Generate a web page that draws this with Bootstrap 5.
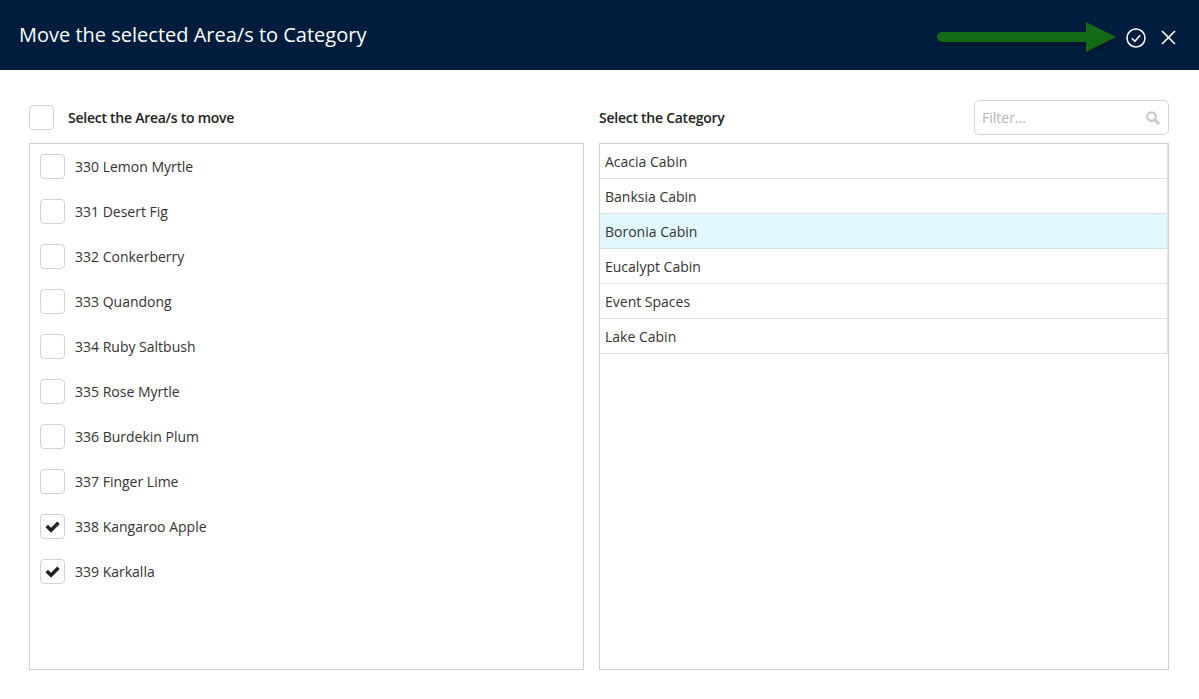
<!DOCTYPE html>
<html lang="en">
<head>
    <meta charset="UTF-8">
    <meta name="viewport" content="width=device-width, initial-scale=1.0">
    <title>Move Areas</title>
    <link href="https://cdn.jsdelivr.net/npm/bootstrap@5.3.3/dist/css/bootstrap.min.css" rel="stylesheet">
    <style>
        body { font-family: "Open Sans", "Liberation Sans", sans-serif; font-size: 14px; color: #333; background: #fff; height: 699px; overflow: hidden; }
        .top-bar { height: 70px; background: #001d3d; color: #fff; padding: 0 23px 0 19px; position: relative; }
        .top-title { font-size: 20px; line-height: 70px; font-weight: 400; margin: 0; }
        .top-icons { gap: 15px; padding-top: 5px; }
        .top-arrow { position: absolute; left: 937px; top: 22px; filter: drop-shadow(0 2px 2px rgba(0,0,0,.45)); }
        .panes { padding: 30px 30px 0 29px; gap: 15px; }
        .pane-left { width: 555px; }
        .pane-right { width: 570px; }
        .pane-head { height: 35px; margin-bottom: 8px; }
        .pane-label { font-weight: 600; color: #222; letter-spacing: -.26px; }
        .head-gap { margin-left: 14px; }
        .tick-box { width: 25px; height: 25px; border: 1px solid #d4d4d4; border-radius: 4px; background: #fff; flex: none; }
        .filter-box { width: 195px; height: 35px; border: 1px solid #d4d4d4; border-radius: 5px; padding: 0 8px 0 7px; color: #b5b5b5; }
        .list-frame { height: 527px; border: 1px solid #d0d0d0; }
        .area-list { padding: 10px 10px 0; }
        .area-row { height: 25px; margin-bottom: 20px; gap: 10px; }
        .cat-row { height: 35px; padding: 0 5px; border-bottom: 1px solid #e2e2e2; border-right: 1px solid #e2e2e2; line-height: 35px; }
        .cat-row.picked { background: #e1f8fe; border-bottom-color: #cfe2e6; }
    </style>
</head>
<body>
    <div class="top-bar d-flex align-items-center justify-content-between">
        <h1 class="top-title">Move the selected Area/s to Category</h1>
        <div class="top-icons d-flex align-items-center">
            <svg width="20" height="20" viewBox="0 0 20 20" fill="none" stroke="#fff"><circle cx="10" cy="10" r="9" stroke-width="1.5"/><path d="M5.8 10.3l3 3 5.4-6" stroke-width="1.5"/></svg>
            <svg width="15" height="15" viewBox="0 0 15 15" fill="none" stroke="#fff" stroke-width="1.6"><path d="M1 1l13 13M14 1L1 14"/></svg>
        </div>
        <svg class="top-arrow" width="180" height="30" viewBox="0 0 180 30"><path d="M5 10H149V0L179 15 149 30V20H5a5 5 0 0 1 0-10z" fill="#116b16"/></svg>
    </div>
    <div class="panes d-flex">
        <div class="pane-left">
            <div class="pane-head d-flex align-items-center">
                <span class="tick-box"></span>
                <span class="pane-label head-gap">Select the Area/s to move</span>
            </div>
            <div class="list-frame area-list" id="areas"></div>
        </div>
        <div class="pane-right">
            <div class="pane-head d-flex align-items-center justify-content-between">
                <span class="pane-label">Select the Category</span>
                <div class="filter-box d-flex align-items-center justify-content-between">
                    <span>Filter...</span>
                    <svg width="14" height="14" viewBox="0 0 14 14" fill="none" stroke="#c8c8c8"><circle cx="5.6" cy="5.6" r="4.3" stroke-width="2.2"/><path d="M9 9l4 4" stroke-width="3"/></svg>
                </div>
            </div>
            <div class="list-frame" id="cats"></div>
        </div>
    </div>
    <script>
        const areas = ['330 Lemon Myrtle', '331 Desert Fig', '332 Conkerberry', '333 Quandong', '334 Ruby Saltbush', '335 Rose Myrtle', '336 Burdekin Plum', '337 Finger Lime', '338 Kangaroo Apple', '339 Karkalla'];
        const cats = ['Acacia Cabin', 'Banksia Cabin', 'Boronia Cabin', 'Eucalypt Cabin', 'Event Spaces', 'Lake Cabin'];
        const tick = '<svg class="d-block" width="23" height="23" viewBox="0 0 23 23"><path d="M4.5 12.3L7 9.8l3 3 6.3-6.3 2.4 2.5-8.7 8.8z" fill="#222"/></svg>';

        document.getElementById('areas').innerHTML = areas.map(a => `
            <div class="area-row d-flex align-items-center">
                <span class="tick-box">${a.startsWith('338') || a.startsWith('339') ? tick : ''}</span>
                <span>${a}</span>
            </div>`).join('');
        document.getElementById('cats').innerHTML = cats.map(c => `
            <div class="cat-row${c === 'Boronia Cabin' ? ' picked' : ''}">${c}</div>`).join('');
    </script>
    <script src="https://cdn.jsdelivr.net/npm/bootstrap@5.3.3/dist/js/bootstrap.bundle.min.js"></script>
</body>
</html>
